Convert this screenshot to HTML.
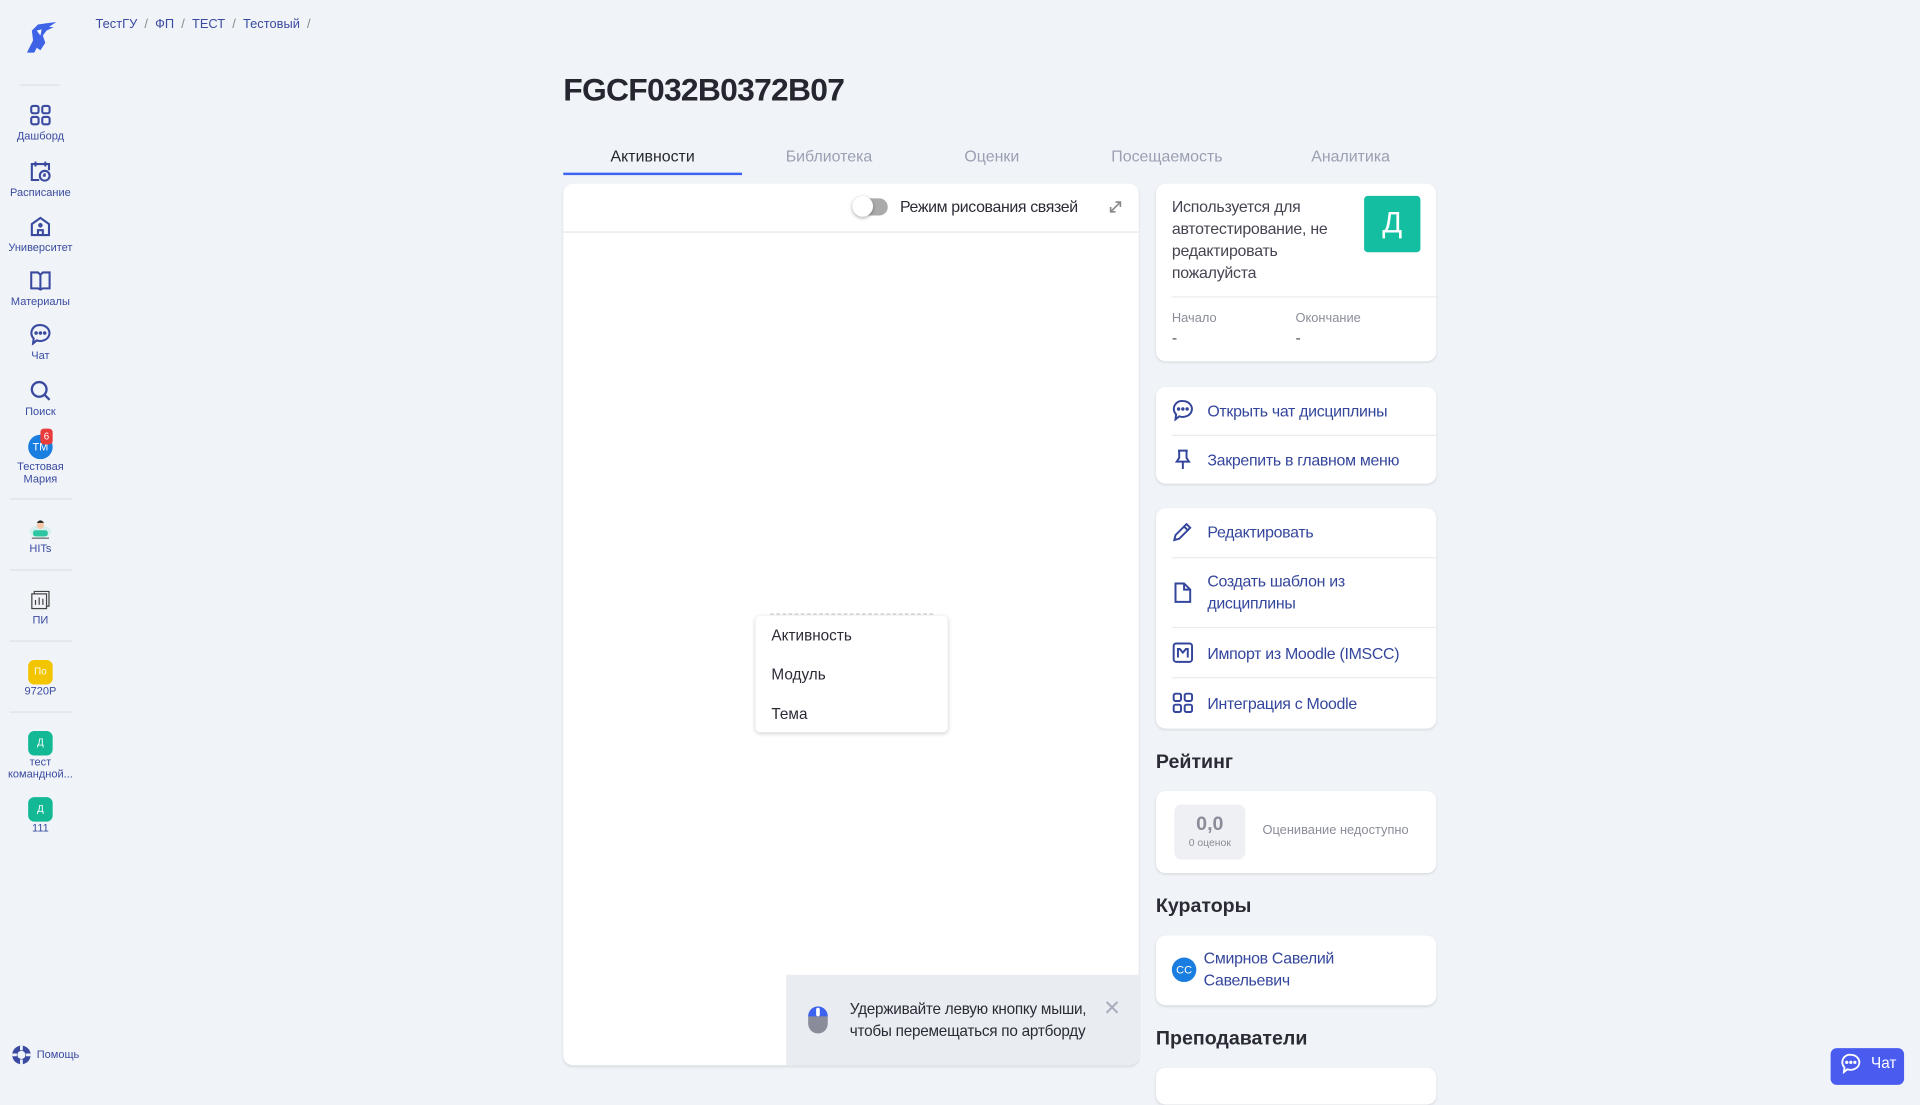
<!DOCTYPE html>
<html><head><meta charset="utf-8"><style>
*{box-sizing:border-box;margin:0;padding:0}
html,body{width:1920px;height:1080px;overflow:hidden;background:#f0f4f8}
#w{position:absolute;left:0;top:0;width:1568px;height:882px;transform:scale(1.22449);transform-origin:0 0;font-family:"Liberation Sans",sans-serif;color:#2b2b36}
.a{position:absolute}
.sb{position:absolute;left:0;width:66px;text-align:center;font-size:9px;color:#3a4aa0;line-height:10px}
.sb svg{display:block;margin:0 auto 3px}
.hr{position:absolute;left:8px;width:51px;height:1px;background:#dde2e8}
.card{position:absolute;background:#fff;border-radius:8px;box-shadow:0 1px 2px rgba(0,0,0,.1)}
.lnk{color:#34469c;font-size:13px;letter-spacing:-.25px}
.it{position:absolute;left:13px;right:0;display:flex;align-items:center}
.it svg{flex:none;margin-right:11px}
.dv{position:absolute;left:13px;right:0;height:1px;background:#e8ebef}
.h{position:absolute;left:944px;font-size:16px;font-weight:bold;color:#2b2b36}
</style></head><body><div id="w">
<svg class="a" style="left:18px;top:15px" width="30" height="30" viewBox="0 0 30 30"><path d="M4 28 L9 18 L8 10 L13 5 L20 4 L28 3 L22 7 L26 7 L20 10 L17 14 L19 20 L15 26 L12 24 L10 28Z" fill="#3f63e6"/><path d="M12 10 L16 9 L15 14Z" fill="#fff"/></svg>
<div class="hr" style="left:16px;width:33px;top:69px"></div>
<div class="sb" style="top:85px"><svg width="18" height="18" viewBox="0 0 18 18" fill="none" stroke="#3a4aa0" stroke-width="1.7"><rect x="1.5" y="1.5" width="6" height="6" rx="1.5"/><rect x="10.5" y="1.5" width="6" height="6" rx="1.5"/><rect x="1.5" y="10.5" width="6" height="6" rx="1.5"/><rect x="10.5" y="10.5" width="6" height="6" rx="1.5"/></svg>Дашборд</div>
<div class="sb" style="top:131px"><svg width="18" height="18" viewBox="0 0 18 18" fill="none" stroke="#3a4aa0" stroke-width="1.7"><path d="M8 16H2V3h14v5M5 1v4M13 1v4"/><circle cx="12.5" cy="12.5" r="4"/><path d="M12.5 10.5v2h-1.5"/></svg>Расписание</div>
<div class="sb" style="top:176px"><svg width="18" height="18" viewBox="0 0 18 18" fill="none" stroke="#3a4aa0" stroke-width="1.7"><path d="M2 16V7l7-5 7 5v9z"/><path d="M7 16v-4h4v4"/><circle cx="9" cy="8" r="1"/></svg>Университет</div>
<div class="sb" style="top:220px"><svg width="18" height="18" viewBox="0 0 18 18" fill="none" stroke="#3a4aa0" stroke-width="1.7"><path d="M1.5 2.5h5.5l2 2 2-2h5.5v13h-5.5l-2 1-2-1H1.5zM9 4.5v12"/></svg>Материалы</div>
<div class="sb" style="top:264px"><svg width="18" height="18" viewBox="0 0 18 18" fill="none" stroke="#3a4aa0" stroke-width="1.7"><path d="M9 1.5a7.5 6.5 0 1 1-3 12.5L3 16.5l.5-4A6.5 6.5 0 0 1 9 1.5z"/><circle cx="5.5" cy="8" r=".6" fill="#3a4aa0"/><circle cx="9" cy="8" r=".6" fill="#3a4aa0"/><circle cx="12.5" cy="8" r=".6" fill="#3a4aa0"/></svg>Чат</div>
<div class="sb" style="top:310px"><svg width="18" height="18" viewBox="0 0 18 18" fill="none" stroke="#3a4aa0" stroke-width="1.9"><circle cx="8" cy="8" r="6"/><path d="M12.5 12.5l4 4"/></svg>Поиск</div>
<div class="a" style="left:23px;top:355px;width:20px;height:20px;border-radius:50%;background:#1a7de0;color:#fff;font-size:9px;line-height:20px;text-align:center">ТМ</div>
<div class="a" style="left:33px;top:350px;width:10px;height:13px;border-radius:3px;background:#ea3b3b;color:#fff;font-size:8px;line-height:13px;text-align:center">6</div>
<div class="sb" style="top:376px">Тестовая<br>Мария</div>
<div class="hr" style="top:407px"></div>
<svg class="a" style="left:23px;top:421px" width="20" height="20" viewBox="0 0 20 20"><ellipse cx="10" cy="13" rx="9" ry="5" fill="#d6f0f0"/><rect x="4" y="12" width="12" height="5" rx="2" fill="#2ec6a0"/><circle cx="10" cy="8" r="3" fill="#f5c9a8"/><path d="M7 6q3-4 6 0" fill="#222"/><rect x="3" y="18" width="14" height="1" fill="#666"/></svg>
<div class="sb" style="top:443px">HITs</div>
<div class="hr" style="top:465px"></div>
<svg class="a" style="left:25px;top:482px" width="16" height="16" viewBox="0 0 16 16" fill="none" stroke="#444" stroke-width="1"><rect x="1" y="3" width="12" height="12"/><path d="M3 3V1h12v12h-2"/><path d="M4 12V8M7 12V6M10 12V7"/></svg>
<div class="sb" style="top:501px">ПИ</div>
<div class="hr" style="top:523px"></div>
<div class="a" style="left:23px;top:539px;width:20px;height:20px;border-radius:5px;background:#f2c500;color:#fff;font-size:8px;line-height:20px;text-align:center">По</div>
<div class="sb" style="top:559px">9720Р</div>
<div class="hr" style="top:581px"></div>
<div class="a" style="left:23px;top:597px;width:20px;height:20px;border-radius:5px;background:#13b995;color:#fff;font-size:8px;line-height:20px;text-align:center">Д</div>
<div class="sb" style="top:617px">тест<br>командной...</div>
<div class="a" style="left:23px;top:651px;width:20px;height:20px;border-radius:5px;background:#13b995;color:#fff;font-size:8px;line-height:20px;text-align:center">Д</div>
<div class="sb" style="top:671px">111</div>
<svg class="a" style="left:9px;top:853px" width="17" height="17" viewBox="0 0 18 18"><circle cx="9" cy="9" r="8" fill="#3a4aa0"/><circle cx="9" cy="9" r="3.5" fill="#f0f4f8"/><path d="M9 1v4M9 13v4M1 9h4M13 9h4" stroke="#f0f4f8" stroke-width="2.4"/></svg>
<div class="a" style="left:30px;top:856px;font-size:9px;color:#3a4aa0">Помощь</div>

<div class="a" style="left:78px;top:14px;font-size:10.5px;color:#3a4aa0">ТестГУ &nbsp;<span style="color:#888">/</span>&nbsp; ФП &nbsp;<span style="color:#888">/</span>&nbsp; ТЕСТ &nbsp;<span style="color:#888">/</span>&nbsp; Тестовый &nbsp;<span style="color:#888">/</span></div>

<div class="a" style="left:460px;top:58px;font-size:26px;font-weight:bold;color:#262631;letter-spacing:-.6px">FGCF032B0372B07</div>

<div class="a" style="left:460px;top:120px;width:146px;text-align:center;font-size:13px;color:#262631">Активности</div>
<div class="a" style="left:460px;top:141px;width:146px;height:2px;background:#3b63f0"></div>
<div class="a" style="left:604px;top:120px;width:146px;text-align:center;font-size:13px;color:#9a9fb2">Библиотека</div>
<div class="a" style="left:737px;top:120px;width:146px;text-align:center;font-size:13px;color:#9a9fb2">Оценки</div>
<div class="a" style="left:880px;top:120px;width:146px;text-align:center;font-size:13px;color:#9a9fb2">Посещаемость</div>
<div class="a" style="left:1030px;top:120px;width:146px;text-align:center;font-size:13px;color:#9a9fb2">Аналитика</div>

<div class="card" style="left:460px;top:150px;width:470px;height:720px;overflow:hidden">
 <div class="a" style="left:0;right:0;top:39px;height:1px;background:#e3e6ea"></div>
 <div class="a" style="left:237px;top:12px;width:28px;height:14px;border-radius:7px;background:#aaa"></div>
 <div class="a" style="left:236px;top:10px;width:17px;height:17px;border-radius:50%;background:#fff;box-shadow:0 1px 3px rgba(0,0,0,.35)"></div>
 <div class="a" style="left:275px;top:11px;font-size:13px;color:#2b2b36;letter-spacing:-.3px">Режим рисования связей</div>
 <svg class="a" style="left:445px;top:13px" width="12" height="12" viewBox="0 0 12 12" fill="none" stroke="#888" stroke-width="1.3"><path d="M2 10l8-8M6 2h4v4M2 6v4h4"/></svg>
 <div class="a" style="left:169px;top:351px;width:133px;border-top:1px dashed #ccc"></div>
 <div class="a" style="left:157px;top:353px;width:157px;height:95px;background:#fff;border-radius:4px;box-shadow:0 1px 4px rgba(0,0,0,.2)">
  <div class="a" style="left:13px;top:9px;font-size:12.5px">Активность</div>
  <div class="a" style="left:13px;top:41px;font-size:12.5px">Модуль</div>
  <div class="a" style="left:13px;top:73px;font-size:12.5px">Тема</div>
 </div>
 <div class="a" style="left:182px;top:646px;width:288px;height:74px;background:#e9edf2">
  <svg class="a" style="left:17px;top:25px" width="18" height="24" viewBox="0 0 18 24"><rect x="1" y="1" width="16" height="22" rx="8" fill="#8a8d99"/><path d="M1 9a8 8 0 0 1 16 0z" fill="#3b63f0"/><rect x="7.5" y="2" width="3" height="7" rx="1.5" fill="#fff"/></svg>
  <div class="a" style="left:52px;top:19px;font-size:12.5px;line-height:18px;color:#2b2b36;letter-spacing:-.2px">Удерживайте левую кнопку мыши,<br>чтобы перемещаться по артборду</div>
  <div class="a" style="left:259px;top:18px;font-size:17px;color:#a8acbb">✕</div>
 </div>
</div>

<div class="card" style="left:944px;top:150px;width:229px;height:145px">
 <div class="a" style="left:13px;top:10px;width:150px;font-size:13px;line-height:18px;color:#454552;letter-spacing:-.2px">Используется для автотестирование, не редактировать пожалуйста</div>
 <div class="a" style="left:170px;top:10px;width:46px;height:46px;border-radius:3px;background:#13bfa0;color:#fff;font-size:24px;line-height:46px;text-align:center">Д</div>
 <div class="dv" style="top:92px"></div>
 <div class="a" style="left:13px;top:104px;font-size:10.5px;color:#8a8d99">Начало</div>
 <div class="a" style="left:114px;top:104px;font-size:10.5px;color:#8a8d99">Окончание</div>
 <div class="a" style="left:13px;top:118px;font-size:13px;color:#555">-</div>
 <div class="a" style="left:114px;top:118px;font-size:13px;color:#555">-</div>
</div>
<div class="card" style="left:944px;top:316px;width:229px;height:79px">
 <div class="it lnk" style="top:10px"><svg width="18" height="18" viewBox="0 0 18 18" fill="none" stroke="#34469c" stroke-width="1.6"><path d="M9 1.5a7.5 6.5 0 1 1-3 12.5L3 16.5l.5-4A6.5 6.5 0 0 1 9 1.5z"/><circle cx="5.5" cy="8" r=".6" fill="#34469c"/><circle cx="9" cy="8" r=".6" fill="#34469c"/><circle cx="12.5" cy="8" r=".6" fill="#34469c"/></svg>Открыть чат дисциплины</div>
 <div class="dv" style="top:39px"></div>
 <div class="it lnk" style="top:50px"><svg width="18" height="18" viewBox="0 0 18 18" fill="none" stroke="#34469c" stroke-width="1.6"><path d="M5 2h8M6 2v6l-2 3h10l-2-3V2M9 11v6"/></svg>Закрепить в главном меню</div>
</div>
<div class="card" style="left:944px;top:415px;width:229px;height:180px">
 <div class="it lnk" style="top:10px"><svg width="18" height="18" viewBox="0 0 18 18" fill="none" stroke="#34469c" stroke-width="1.6"><path d="M2 16l1-4L12 3l3 3-9 9zM10 5l3 3"/></svg>Редактировать</div>
 <div class="dv" style="top:40px"></div>
 <div class="it lnk" style="top:51px;line-height:18px"><svg width="18" height="18" viewBox="0 0 18 18" fill="none" stroke="#34469c" stroke-width="1.6"><path d="M3 1.5h7l5 5v10H3zM10 1.5v5h5"/></svg>Создать шаблон из<br>дисциплины</div>
 <div class="dv" style="top:97px"></div>
 <div class="it lnk" style="top:109px"><svg width="18" height="18" viewBox="0 0 18 18" fill="none" stroke="#34469c" stroke-width="1.6"><rect x="1.5" y="1.5" width="15" height="15" rx="2"/><path d="M5 13V6h1.5l2.5 3 2.5-3H13v7"/></svg>Импорт из Moodle (IMSCC)</div>
 <div class="dv" style="top:138px"></div>
 <div class="it lnk" style="top:150px"><svg width="18" height="18" viewBox="0 0 18 18" fill="none" stroke="#34469c" stroke-width="1.6"><rect x="1.5" y="1.5" width="6" height="6" rx="1.5"/><rect x="10.5" y="1.5" width="6" height="6" rx="1.5"/><rect x="1.5" y="10.5" width="6" height="6" rx="1.5"/><rect x="10.5" y="10.5" width="6" height="6" rx="1.5"/></svg>Интеграция с Moodle</div>
</div>
<div class="h" style="top:614px">Рейтинг</div>
<div class="card" style="left:944px;top:646px;width:229px;height:67px">
 <div class="a" style="left:15px;top:11px;width:58px;height:45px;border-radius:6px;background:#eef0f4;text-align:center">
  <div style="font-size:16px;font-weight:bold;color:#8a8d99;margin-top:8px;line-height:18px">0,0</div>
  <div style="font-size:8.5px;color:#8a8d99">0 оценок</div>
 </div>
 <div class="a" style="left:87px;top:26px;font-size:10.5px;color:#8a8d99">Оценивание недоступно</div>
</div>
<div class="h" style="top:732px">Кураторы</div>
<div class="card" style="left:944px;top:764px;width:229px;height:57px">
 <div class="a" style="left:13px;top:18px;width:20px;height:20px;border-radius:50%;background:#1a7de0;color:#fff;font-size:9px;line-height:20px;text-align:center">СС</div>
 <div class="a lnk" style="left:39px;top:10px;line-height:18px">Смирнов Савелий<br>Савельевич</div>
</div>
<div class="h" style="top:840px">Преподаватели</div>
<div class="card" style="left:944px;top:872px;width:229px;height:30px"></div>

<div class="a" style="left:1495px;top:856px;width:60px;height:30px;border-radius:5px;background:#4a5cf0;color:#fff;font-size:12.5px">
 <svg class="a" style="left:8px;top:4px" width="17" height="17" viewBox="0 0 18 18" fill="none" stroke="#fff" stroke-width="1.6"><path d="M9 1.5a7.5 6.5 0 1 1-3 12.5L3 16.5l.5-4A6.5 6.5 0 0 1 9 1.5z"/><circle cx="5.5" cy="8" r=".6" fill="#fff"/><circle cx="9" cy="8" r=".6" fill="#fff"/><circle cx="12.5" cy="8" r=".6" fill="#fff"/></svg>
 <div class="a" style="left:33px;top:5px">Чат</div>
</div>
</div></body></html>
